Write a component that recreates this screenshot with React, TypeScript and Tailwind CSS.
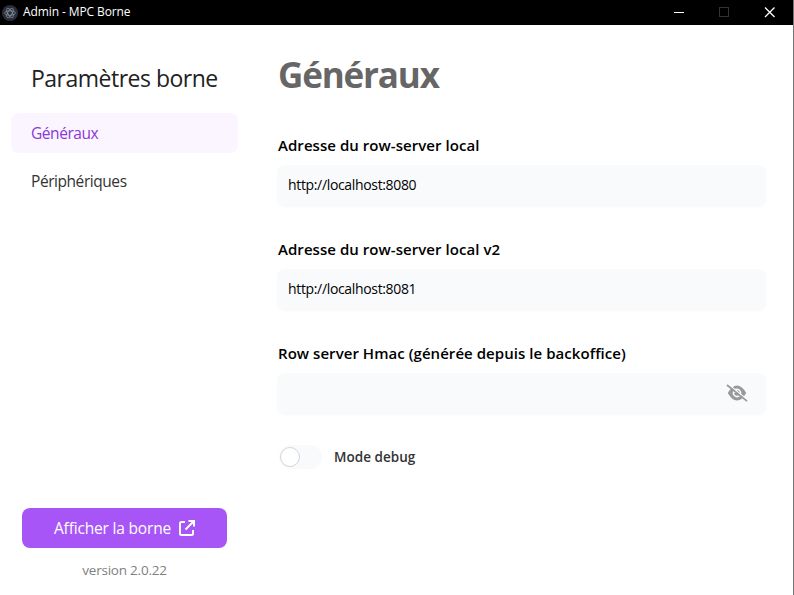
import { ReactNode } from "react";

function ElectronIcon() {
  return (
    <svg className="size-4" viewBox="0 0 16 16" fill="none">
      <circle cx="8" cy="8" r="8" fill="#2b2e3a" />
      <g stroke="#b4cdd3" strokeOpacity="0.8" strokeWidth="0.55">
        <ellipse cx="8" cy="8" rx="5.300" ry="2.200" />
        <ellipse cx="8" cy="8" rx="5.300" ry="2.200" transform="rotate(60 8 8)" />
        <ellipse cx="8" cy="8" rx="5.300" ry="2.200" transform="rotate(120 8 8)" />
      </g>
    </svg>
  );
}

function TitleBar() {
  return (
    <header className="flex h-[25px] shrink-0 items-center bg-black pl-0.5 text-white">
      <ElectronIcon />
      <span className="-mt-px ml-[5px] whitespace-nowrap text-[12px] leading-4 tracking-[-0.1px]">Admin - MPC Borne</span>
      <svg className="ml-auto h-[25px] w-[138px]" viewBox="0 0 138 25" fill="none" shapeRendering="crispEdges">
        <path d="M19 12.5h10" stroke="#fff" />
        <rect x="64.5" y="7.5" width="9" height="9" stroke="#333" />
        <path d="M110 7.500l9.500 9.500M119.500 7.500L110 17" stroke="#fff" strokeWidth="1.300" shapeRendering="auto" />
      </svg>
    </header>
  );
}

function Field({ label, value, children }: { label: string; value: string; children?: ReactNode }) {
  return (
    <div className="mb-[31px] flex flex-col">
      <label className="h-6 whitespace-nowrap pl-px text-[15px] leading-6 font-semibold tracking-[0.05px] text-black">
        {label}
      </label>
      <div className="mt-2 flex h-[41px] items-center rounded-lg bg-[#f9fafc] px-[11px] pb-px shadow-[0_1px_2px_rgba(0,0,0,0.03)]">
        <span className="text-[14px] leading-5 tracking-[-0.34px] text-black">{value}</span>
        {children}
      </div>
    </div>
  );
}

export default function App() {
  return (
    <div className="flex h-[595px] w-[794px] flex-col overflow-hidden border-r border-[#777] bg-white font-['Open_Sans','Noto_Sans',sans-serif]">
      <TitleBar />
      <div className="flex min-h-0 flex-1">
        <aside className="flex w-[249px] flex-col px-[11px] pt-9">
          <h2 className="-mt-px mb-px h-9 whitespace-nowrap pl-5 text-[23px] leading-9 font-normal tracking-[-0.5px] text-[#222]">
            Paramètres borne
          </h2>
          <nav className="mt-4 flex flex-col gap-2 text-[15.5px] font-normal tracking-[-0.44px]">
            <a className="flex h-10 items-center rounded-lg bg-[#faf5ff] pt-0.5 pl-5 text-[#8a38d8]">Généraux</a>
            <a className="flex h-10 items-center rounded-lg pt-0.5 pl-5 text-[#333]">Périphériques</a>
          </nav>
          <div className="mt-auto flex flex-col px-[11px] pb-[15px]">
            <button className="flex h-10 items-center justify-center gap-2 rounded-lg bg-[#a855f7] text-[16px] text-white">
              <span className="pt-px text-[15.5px] font-normal tracking-[-0.18px]">Afficher la borne</span>
              <svg className="size-4" viewBox="0 0 16 16" fill="none" stroke="currentColor" strokeWidth="2">
                <path d="M6 2H2.500Q1 2 1 3.500V13.500Q1 15 2.500 15H12.500Q14 15 14 13.500V10M9.500 1H15V6.500M15 1L6.500 9.500" />
              </svg>
            </button>
            <p className="mt-3 text-center text-[13.5px] leading-5 font-normal tracking-[-0.22px] text-[#808080]">version 2.0.22</p>
          </div>
        </aside>
        <main className="flex w-[517px] flex-col pl-7 pt-[30px]">
          <h1 className="mb-[38px] h-10 pl-px text-[35px] leading-10 font-bold tracking-[-1.15px] text-[#666]">Généraux</h1>
          <Field label="Adresse du row-server local" value="http://localhost:8080" />
          <Field label="Adresse du row-server local v2" value="http://localhost:8081" />
          <Field label="Row server Hmac (générée depuis le backoffice)" value="">
            <svg className="ml-auto mr-[7px] size-[22px]" viewBox="0 0 22 22" fill="none">
              <path
                d="M1.800 11Q6 3.500 11 3.500T20.200 11Q16 18.500 11 18.500T1.800 11ZM11 6.600A4.400 4.400 0 1 0 11 15.400A4.400 4.400 0 1 0 11 6.600Z"
                fill="#999"
                fillRule="evenodd"
              />
              <path d="M11 8.200a2.800 2.800 0 1 1-2.800 2.800h2.800z" fill="#999" />
              <path d="M2 2L21.500 18" stroke="#f9fafc" strokeWidth="1.500" />
              <path d="M1 3L21 19.200" stroke="#999" strokeWidth="1.700" />
            </svg>
          </Field>
          <div className="flex items-center pl-0.5">
            <div className="flex h-6 w-[43px] items-center rounded-full bg-[#f9fafc] pl-px">
              <div className="size-5 rounded-full border border-[#d1d5db] bg-white" />
            </div>
            <span className="ml-3 text-[13.5px] leading-5 font-semibold tracking-[0.03px] text-[#333]">Mode debug</span>
          </div>
        </main>
      </div>
    </div>
  );
}
